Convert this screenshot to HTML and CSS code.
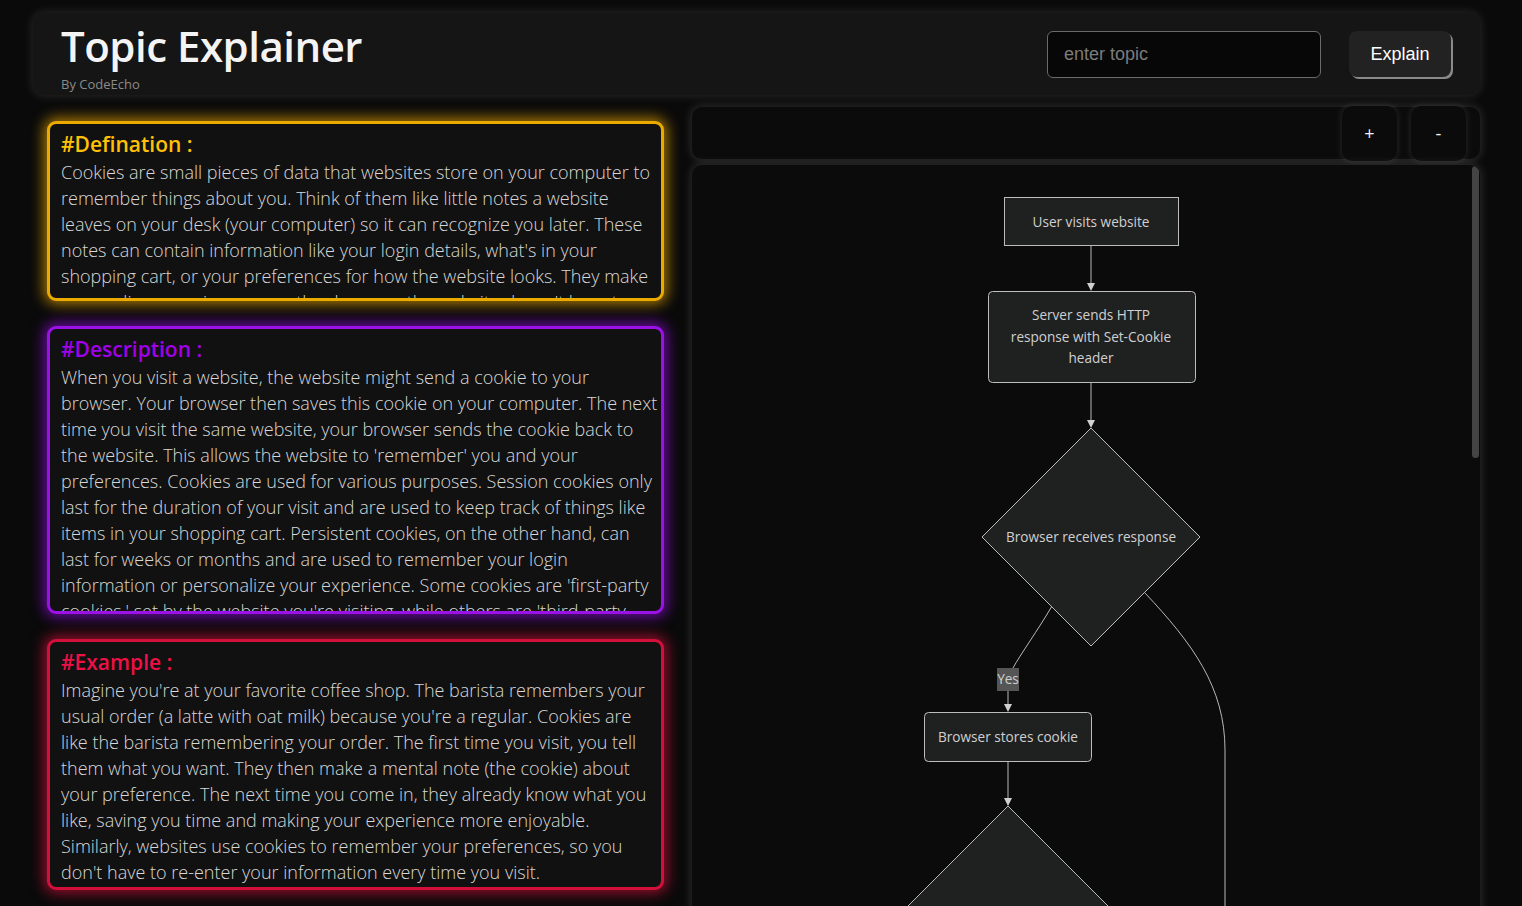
FILE: index.html
```html
<!DOCTYPE html>
<html lang="en">
<head>
<meta charset="utf-8">
<title>Topic Explainer</title>
<link rel="stylesheet" href="styles.css">
</head>
<body>
<div class="app">
  <header class="topbar">
    <div class="brand">
      <h1 class="brand-title">Topic Explainer</h1>
      <p class="brand-sub">By CodeEcho</p>
    </div>
    <div class="search">
      <input class="search-input" type="text" placeholder="enter topic">
      <button class="search-btn">Explain</button>
    </div>
  </header>
  <main class="main">
    <section class="cards">
      <article class="card card-def">
        <h2 class="card-title">#Defination :</h2>
        <p class="card-text">Cookies are small pieces of data that websites store on your computer to remember things about you. Think of them like little notes a website leaves on your desk (your computer) so it can recognize you later. These notes can contain information like your login details, what's in your shopping cart, or your preferences for how the website looks. They make your online experience smoother because the website doesn't have to ask you for the same information every time you visit.</p>
      </article>
      <article class="card card-desc">
        <h2 class="card-title">#Description :</h2>
        <p class="card-text">When you visit a website, the website might send a cookie to your browser. Your browser then saves this cookie on your computer. The next time you visit the same website, your browser sends the cookie back to the website. This allows the website to 'remember' you and your preferences. Cookies are used for various purposes. Session cookies only last for the duration of your visit and are used to keep track of things like items in your shopping cart. Persistent cookies, on the other hand, can last for weeks or months and are used to remember your login information or personalize your experience. Some cookies are 'first-party cookies,' set by the website you're visiting, while others are 'third-party cookies,' set by other websites, often for advertising purposes.</p>
      </article>
      <article class="card card-ex">
        <h2 class="card-title">#Example :</h2>
        <p class="card-text">Imagine you're at your favorite coffee shop. The barista remembers your usual order (a latte with oat milk) because you're a regular. Cookies are like the barista remembering your order. The first time you visit, you tell them what you want. They then make a mental note (the cookie) about your preference. The next time you come in, they already know what you like, saving you time and making your experience more enjoyable. Similarly, websites use cookies to remember your preferences, so you don't have to re-enter your information every time you visit.</p>
      </article>
    </section>
    <section class="viz">
      <div class="toolbar">
        <button class="zoom-btn">+</button>
        <button class="zoom-btn">-</button>
      </div>
      <div class="canvas">
        <svg class="diagram" width="788" height="760" viewBox="0 0 788 760" xmlns="http://www.w3.org/2000/svg">
          <g class="edges" fill="none" stroke="#b8b8b8" stroke-width="1">
            <path d="M399 80 L399 119"/>
            <path d="M399 217 L399 256"/>
            <path d="M360 441 C 346 465, 328 490, 321 503"/>
            <path d="M316 526 L316 540"/>
            <path d="M453 428 C 500 478, 533 522, 533 585 L533 760"/>
            <path d="M316 596 L316 634"/>
          </g>
          <g class="heads" fill="#d0d0d0">
            <polygon points="395,118 403,118 399,126"/>
            <polygon points="395,255 403,255 399,263"/>
            <polygon points="312,539 320,539 316,547"/>
            <polygon points="312,633 320,633 316,641"/>
          </g>
          <g class="nodes" fill="#1f2020" stroke="#bdbdbd" stroke-width="1">
            <rect x="312.5" y="32.5" width="174" height="48"/>
            <rect x="296.5" y="126.5" width="207" height="91" rx="4"/>
            <polygon points="399,263 508,372 399,481 290,372"/>
            <rect x="232.5" y="547.5" width="167" height="49" rx="4"/>
            <polygon points="316,641 436,761 316,881 196,761"/>
          </g>
          <rect x="305" y="503" width="22" height="23" fill="#555555"/>
          <g class="labels">
            <text x="399" y="62">User visits website</text>
            <text x="399" y="155">Server sends HTTP</text>
            <text x="399" y="177">response with Set-Cookie</text>
            <text x="399" y="198">header</text>
            <text x="399" y="377">Browser receives response</text>
            <text x="316" y="519">Yes</text>
            <text x="316" y="577">Browser stores cookie</text>
          </g>
        </svg>
        <div class="scroll-thumb"></div>
      </div>
    </section>
  </main>
</div>
</body>
</html>
```
FILE: styles.css
```css
* { box-sizing: border-box; }

html, body {
  margin: 0;
  height: 100%;
  overflow: hidden;
  background: #0a0a0a;
  font-family: "Open Sans", "Noto Sans", sans-serif;
  color: #d6d6d6;
}

.app {
  padding: 13px 42px 0 33px;
}

.topbar {
  height: 82px;
  display: flex;
  align-items: center;
  justify-content: space-between;
  padding: 0 29px 0 28px;
  background: #151515;
  border-radius: 12px;
  box-shadow: 0 0 10px 2px rgba(255, 255, 255, 0.10);
}

.brand {
  align-self: flex-start;
  padding-top: 9px;
}

.brand-title {
  margin: 0;
  font-size: 42px;
  line-height: 48px;
  font-weight: 600;
  letter-spacing: -0.5px;
  color: #f4f4f4;
}

.brand-sub {
  margin: 6px 0 0;
  font-size: 13px;
  line-height: 16px;
  color: #8a8a8a;
}

.search {
  display: flex;
  align-items: center;
  gap: 28px;
}

.search-input {
  width: 274px;
  height: 47px;
  padding: 0 16px;
  background: #070707;
  border: 1px solid #6a6a6a;
  border-radius: 6px;
  font-family: "Liberation Sans", Arial, sans-serif;
  font-size: 18px;
  color: #ddd;
  outline: none;
}

.search-input::placeholder { color: #7c7c7c; }

.search-btn {
  width: 102px;
  height: 46px;
  background: #222222;
  border: none;
  border-radius: 8px;
  box-shadow: 2px 2px 0 #8a8a8a;
  font-family: "Liberation Sans", Arial, sans-serif;
  font-size: 18px;
  color: #ffffff;
}

.main {
  display: flex;
}

.cards {
  width: 659px;
  flex: none;
  padding: 26px 28px 0 14px;
  display: flex;
  flex-direction: column;
  gap: 25px;
}

.card {
  background: #111111;
  border: 3px solid;
  border-radius: 9px;
  padding: 6px 3px 0 11px;
  overflow: hidden;
}

.card-def {
  height: 180px;
  border-color: #eaaa00;
  box-shadow: 0 0 14px 3px rgba(240, 170, 0, 0.7);
}
.card-def .card-title { color: #ffc107; }

.card-desc {
  height: 288px;
  border-color: #9a12e6;
  box-shadow: 0 0 14px 3px rgba(150, 10, 230, 0.7);
}
.card-desc .card-title { color: #a000ea; }

.card-ex {
  height: 251px;
  border-color: #d3103c;
  box-shadow: 0 0 14px 3px rgba(215, 15, 60, 0.7);
}
.card-ex .card-title { color: #ee1046; }

.card-title {
  margin: 0;
  font-size: 21px;
  line-height: 28px;
  font-weight: 600;
}

.card-text {
  margin: 1px 0 0;
  font-size: 18px;
  line-height: 26px;
  font-weight: 300;
  color: #d8d8d8;
}

.viz {
  flex: 1;
  padding-top: 12px;
}

.toolbar {
  height: 52px;
  display: flex;
  align-items: center;
  justify-content: flex-end;
  gap: 14px;
  padding-right: 14px;
  background: #0b0b0b;
  border-radius: 10px;
  box-shadow: 0 0 8px 2px rgba(255, 255, 255, 0.12);
}

.zoom-btn {
  width: 55px;
  height: 55px;
  flex: none;
  background: #0b0b0b;
  border: none;
  border-radius: 10px;
  box-shadow: 0 0 6px 1px rgba(255, 255, 255, 0.10);
  font-family: "Open Sans", sans-serif;
  font-size: 18px;
  color: #f0f0f0;
}

.canvas {
  position: relative;
  margin-top: 6px;
  height: 760px;
  background: #0b0b0b;
  border-radius: 10px;
  box-shadow: 0 0 8px 2px rgba(255, 255, 255, 0.12);
  overflow: hidden;
}

.diagram {
  display: block;
}

.labels text {
  font-family: "Open Sans", sans-serif;
  font-size: 13.6px;
  font-weight: 500;
  fill: #d0d0d0;
  text-anchor: middle;
}

.scroll-thumb {
  position: absolute;
  top: 1px;
  right: 1px;
  width: 7px;
  height: 292px;
  border-radius: 4px;
  background: #444444;
}
```
